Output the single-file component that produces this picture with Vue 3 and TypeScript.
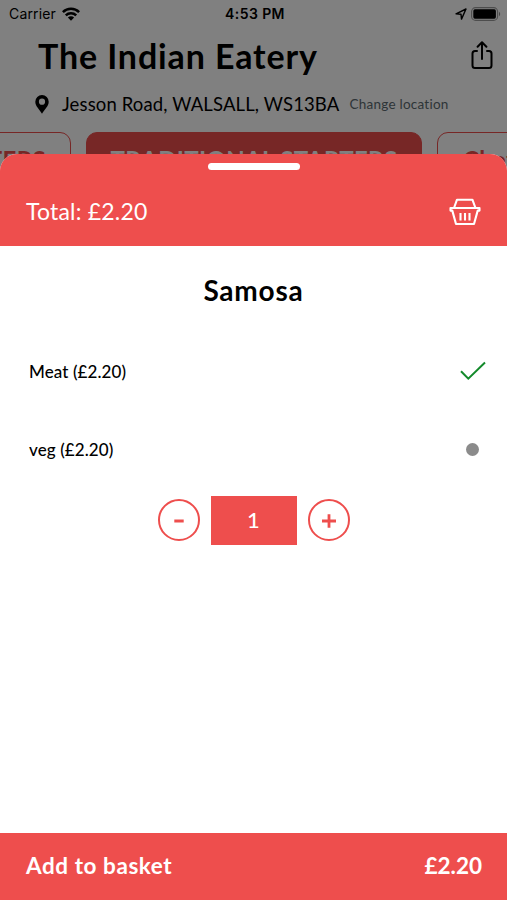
<script setup lang="ts">
import { computed, ref } from 'vue'

interface Option {
  name: string
  price: number
}

const options: Option[] = [
  { name: 'Meat', price: 2.2 },
  { name: 'veg', price: 2.2 },
]
const selected = ref(0)
const quantity = ref(1)
const money = (value: number) => `£${value.toFixed(2)}`
const total = computed(() => money(options[selected.value].price * quantity.value))

function change(step: number) {
  quantity.value = Math.max(1, quantity.value + step)
}
</script>

<template>
  <div class="screen">
    <div class="page">
      <div class="status">
        <div class="carrier">
          <span class="carrier-name">Carrier</span>
          <svg width="18" height="14" viewBox="0 0 18 14">
            <g fill="none" stroke="#000" stroke-width="2.5">
              <path d="M.9 5.2a11.5 11.5 0 0 1 16.2 0" />
              <path d="M3.8 8.3a7.4 7.4 0 0 1 10.4 0" />
            </g>
            <path d="M9 13.7 5.9 10.5a4.4 4.4 0 0 1 6.2 0z" />
          </svg>
        </div>
        <span class="time">4:53 PM</span>
        <div class="indicators">
          <svg width="12" height="12" viewBox="0 0 12 12">
            <path d="M1 5.8 11 1 6.5 11.1 6 6.2z" fill="none" stroke="#000" stroke-width="1.4" stroke-linejoin="round" />
          </svg>
          <svg width="30" height="14" viewBox="0 0 30 14">
            <rect x=".6" y=".6" width="26" height="12.8" rx="4" fill="none" stroke="#000" stroke-opacity=".4" stroke-width="1.1" />
            <rect x="2.3" y="2.3" width="22.6" height="9.4" rx="1.6" />
            <path d="M28 4.8c1.6.7 1.6 3.7 0 4.4z" fill-opacity=".45" />
          </svg>
        </div>
      </div>

      <div class="heading">
        <h1>The Indian Eatery</h1>
        <svg width="22" height="30" viewBox="0 0 22 30">
          <g fill="none" stroke="#000" stroke-width="2" stroke-linecap="round" stroke-linejoin="round">
            <path d="M6 10H4a2.500 2.500 0 0 0-2.500 2.500v12A2.500 2.500 0 0 0 4 27h14a2.500 2.500 0 0 0 2.500-2.500v-12a2.500 2.500 0 0 0-2.500-2.500h-2" />
            <path d="M11 18V1.500M6.600 5.700 11 1.300l4.400 4.400" />
          </g>
        </svg>
      </div>

      <div class="location">
        <svg width="14" height="19" viewBox="0 0 14 19">
          <path fill-rule="evenodd" d="M7 0a6.700 6.700 0 0 0-6.700 6.700C.3 11.200 4.600 14.500 7 18.700c2.400-4.200 6.700-7.500 6.700-12A6.700 6.700 0 0 0 7 0zm0 3.600a3 3 0 1 1 0 6.200 3 3 0 0 1 0-6.200z" />
        </svg>
        <span class="address">Jesson Road, WALSALL, WS13BA</span>
        <span class="change">Change location</span>
      </div>

      <div class="chips">
        <div class="chip first">STARTERS</div>
        <div class="chip active">TRADITIONAL STARTERS</div>
        <div class="chip last">Chef</div>
      </div>
      <div class="dim"></div>
    </div>

    <section class="sheet">
      <header class="sheet-head">
        <div class="grabber"></div>
        <div class="total-row">
          <span class="total">Total: {{ total }}</span>
          <svg width="32" height="28" viewBox="0 0 32 28">
            <g fill="none" stroke="#fff" stroke-width="2.100" stroke-linejoin="round">
              <path d="M5 10 8 1.700h15.400L26.500 10" />
              <path d="M1.500 10h29v2.600h-1.800L25 26H7L3.300 12.600H1.500z" />
              <path d="M11.500 15v7.500M16 15v7.500M20.500 15v7.500" />
            </g>
          </svg>
        </div>
      </header>

      <main class="sheet-body">
        <h2>Samosa</h2>
        <div v-for="(option, i) in options" :key="option.name" class="option" @click="selected = i">
          <span>{{ option.name }} ({{ money(option.price) }})</span>
          <svg v-if="selected === i" class="check" width="26" height="20" viewBox="0 0 26 20">
            <path d="m1 10.300 7.300 7.400L25 1.500" fill="none" stroke="#138A2B" stroke-width="2" />
          </svg>
          <span v-else class="dot"></span>
        </div>

        <div class="stepper">
          <button aria-label="Decrease" @click="change(-1)">
            <svg width="20" height="20" viewBox="0 0 20 20"><path d="M5.300 11h9.400" stroke="#EE4E4D" stroke-width="3" /></svg>
          </button>
          <div class="count">{{ quantity }}</div>
          <button aria-label="Increase" @click="change(1)">
            <svg width="20" height="20" viewBox="0 0 20 20"><path d="M3 11h14M10 4.300v13.400" stroke="#EE4E4D" stroke-width="2.800" /></svg>
          </button>
        </div>
      </main>

      <footer class="basket">
        <span class="add">Add to basket</span>
        <span class="price">{{ total }}</span>
      </footer>
    </section>
  </div>
</template>

<style>
body {
  margin: 0;
}
</style>

<style scoped>
* {
  box-sizing: border-box;
}
.screen {
  position: relative;
  width: 507px;
  height: 900px;
  overflow: hidden;
  background: #fff;
  color: #000;
  font-family: Lato, "Open Sans", sans-serif;
  font-variant-ligatures: none;
  white-space: nowrap;
}
svg {
  display: block;
  flex: none;
}
.page {
  position: relative;
  height: 200px;
  overflow: hidden;
}
.dim {
  position: absolute;
  inset: 0;
  background: rgba(0, 0, 0, 0.498);
}
.status {
  display: grid;
  grid-template-columns: 1fr auto 1fr;
  align-items: center;
  height: 27px;
  padding: 0 6px 0 9px;
  font-family: Inter, sans-serif;
  font-size: 14px;
  letter-spacing: 0.15px;
}
.carrier {
  display: flex;
  align-items: center;
  gap: 6px;
}
.time {
  font-weight: 600;
  letter-spacing: 0.4px;
}
.indicators {
  display: flex;
  align-items: center;
  justify-content: flex-end;
  gap: 4px;
}
.heading {
  display: flex;
  align-items: center;
  justify-content: space-between;
  height: 57px;
  padding: 0 14px 0 38px;
}
h1 {
  margin: 0;
  font-size: 34px;
  line-height: 40px;
  font-weight: 700;
  letter-spacing: 0.87px;
}
.location {
  display: flex;
  align-items: center;
  height: 38px;
  margin-top: 1px;
  padding-left: 35px;
}
.address {
  margin-left: 13px;
  font-size: 18.500px;
  letter-spacing: 0.13px;
}
.change {
  margin-left: 10px;
  font-size: 13.500px;
  letter-spacing: 0.25px;
  color: #5c6a70;
}
.chips {
  display: flex;
  gap: 15px;
  margin-top: 9px;
  margin-left: -90px;
}
.chip {
  flex: none;
  height: 58px;
  border: 1.500px solid #ee4e4d;
  border-radius: 11px;
  color: #ee4e4d;
  font-size: 24px;
  font-weight: 700;
  line-height: 53px;
  letter-spacing: 0.35px;
  text-align: center;
}
.chip.first {
  width: 161px;
  padding-right: 24px;
  text-align: right;
}
.chip.active {
  width: 336px;
  background: #ee4e4d;
  color: #fff;
}
.chip.last {
  width: 160px;
  padding-left: 25px;
  text-align: left;
}
.sheet {
  position: absolute;
  inset: 153.500px 0 0;
  display: flex;
  flex-direction: column;
  overflow: hidden;
  border-radius: 17px 17px 0 0;
  background: #fff;
}
.sheet-head {
  height: 92.500px;
  padding-top: 9.500px;
  background: #ee4e4d;
  color: #fff;
}
.grabber {
  width: 92px;
  height: 6.500px;
  margin: 0 auto;
  border-radius: 3.500px;
  background: #fff;
}
.total-row {
  display: flex;
  align-items: center;
  justify-content: space-between;
  height: 84px;
  padding: 0 26px 0 26px;
}
.total {
  margin-top: -2px;
  font-size: 23px;
  letter-spacing: 0.2px;
}
.sheet-body {
  flex: 1;
}
h2 {
  margin: 25px 0 23px;
  font-size: 28px;
  line-height: 38px;
  font-weight: 700;
  letter-spacing: 0.8px;
  text-align: center;
}
.option {
  display: flex;
  align-items: center;
  justify-content: space-between;
  height: 78px;
  padding: 0 21px 0 29px;
  font-size: 17px;
  font-weight: 500;
  letter-spacing: 0.1px;
}
.dot {
  width: 13px;
  height: 13px;
  margin-right: 7px;
  border-radius: 50%;
  background: #8b8b8b;
}
.stepper {
  display: flex;
  align-items: center;
  justify-content: center;
  gap: 11px;
  margin-top: 7.500px;
}
.stepper button {
  display: flex;
  align-items: center;
  justify-content: center;
  width: 42px;
  height: 42px;
  padding: 0;
  border: 2px solid #ee4e4d;
  border-radius: 50%;
  background: none;
}
.count {
  width: 86px;
  height: 49px;
  background: #ee4e4d;
  color: #fff;
  font-size: 22px;
  font-weight: 500;
  line-height: 47px;
  text-align: center;
}
.basket {
  display: flex;
  align-items: center;
  justify-content: space-between;
  height: 67px;
  padding: 0 25px 2px 26px;
  background: #ee4e4d;
  color: #fff;
  font-size: 22.500px;
  font-weight: 700;
}
.add {
  letter-spacing: 0.57px;
}
</style>
